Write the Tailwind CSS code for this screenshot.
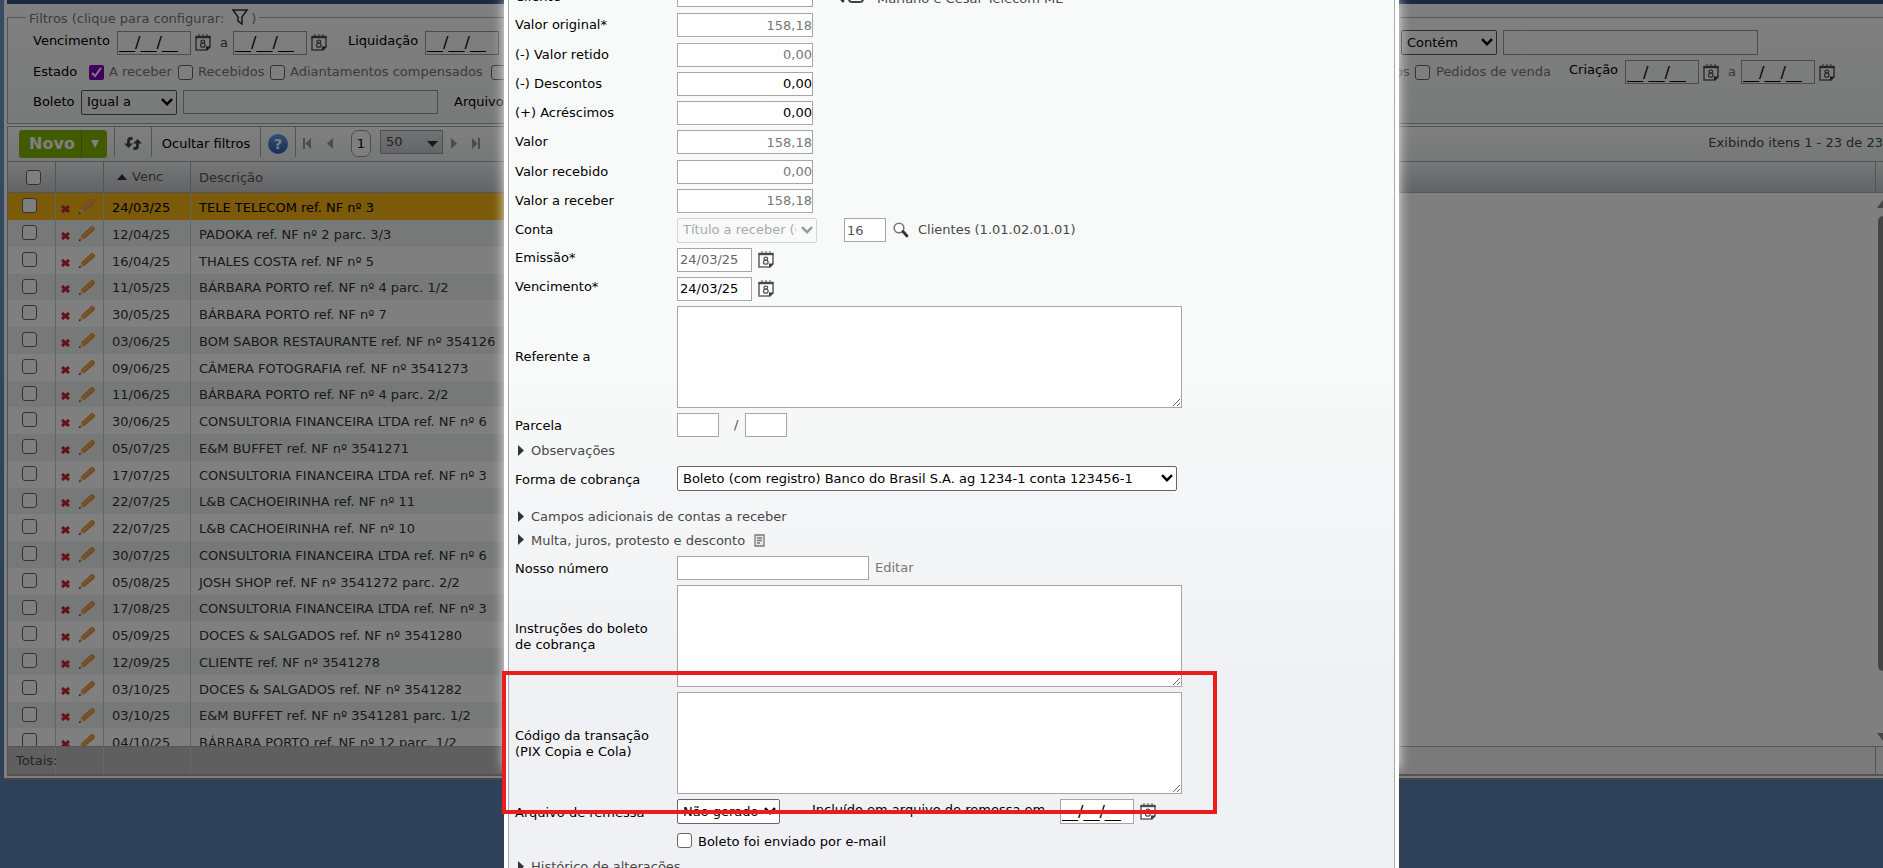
<!DOCTYPE html>
<html lang="pt-BR">
<head>
    <meta charset="UTF-8">
    <meta name="viewport" content="width=device-width, initial-scale=1.0">
    <title>Contas a receber</title>
    <script src="https://cdn.jsdelivr.net/npm/@tailwindcss/browser@4"></script>
</head>
<body class="font-['Verdana','DejaVu_Sans',sans-serif] text-[13px] leading-4 text-[#484848]">
    <!-- Shared icons -->
    <svg class="hidden">
        <symbol id="i-cal" viewBox="0 0 16 17">
            <path d="M1 3h14v10l-3 3H1z" fill="#fff" stroke="#666" stroke-width="1.600"/>
            <path d="M.5 3h15" stroke="#4a4a4a" stroke-width="2.400"/>
            <path d="M4 0v2M8 0v2M12 0v2" stroke="#888" stroke-width="1.500"/>
            <path d="M11 16.500V12.500h4.500z" fill="#333"/>
            <ellipse cx="7.800" cy="7.600" rx="1.900" ry="1.500" fill="none" stroke="#555" stroke-width="1.300"/>
            <ellipse cx="7.800" cy="11.200" rx="2.300" ry="2" fill="none" stroke="#555" stroke-width="1.300"/>
        </symbol>
        <symbol id="i-chev" viewBox="0 0 12 8">
            <path d="M1 1.200 6 6.200l5-5" fill="none" stroke="currentColor" stroke-width="2.400"/>
        </symbol>
        <symbol id="i-search" viewBox="0 0 16 16">
            <circle cx="6" cy="6" r="4.800" fill="#fff" stroke="#777" stroke-width="1.600"/>
            <path d="m10 9.500 4 4.500" stroke="#333" stroke-width="2.800" stroke-linecap="round"/>
        </symbol>
        <symbol id="i-x" viewBox="0 0 9 8">
            <path d="M1 1 8 7M8 1 1 7" stroke="#cc2236" stroke-width="3"/>
        </symbol>
        <symbol id="i-pencil" viewBox="0 0 18 17">
            <path d="M1 16.500l2.500-6 3.500 3.500z" fill="#e8d0a8"/>
            <path d="M.8 16.700l1-2.500 1.500 1.500z" fill="#333"/>
            <path d="M3 11 13 1.500q2-2 4 0t0 4L6.500 14.500z" fill="#e8963c"/>
            <path d="m4.500 12.500 11-10" stroke="#f5b068" stroke-width="1.500"/>
        </symbol>
        <symbol id="i-tri" viewBox="0 0 6 11">
            <path d="M0 0 6 5.500 0 11z" fill="#333"/>
        </symbol>
    </svg>

    <main class="relative h-screen overflow-hidden bg-linear-to-b from-[#6b94c6] from-20% to-[#5c82b2] to-70%">
        <!-- Listing behind the dialog -->
        <div class="w-[calc(100%+20px)] pl-1">
            <div class="border-b-2 border-[#8a8a88] bg-white pl-[3px] pb-[2px]">
                <div class="h-1 bg-[#34567f]"></div>
                <div class="border-b-2 border-[#a5a9b3]">
                    <fieldset class="mt-[2px] border border-[#a5a9b3] bg-linear-to-b from-white to-[#f0f3f2] pl-[18px] pb-[6px]">
                        <legend class="flex h-[22px] items-center gap-2 bg-white px-[3px] pt-1 text-[#777]">
                            Filtros (clique para configurar:
                            <span class="flex items-center gap-[3px]"><svg class="mb-1 h-4 w-4" viewBox="0 0 16 16" fill="#fff" stroke="#333" stroke-width="1.500"><path d="M1 1h14l-5 7v7l-4-3V8z"/></svg>)</span>
                        </legend>
                        <div class="flex h-[29px] items-center pl-[7px]">
                            <label for="venc1" class="mb-1 w-[84px] shrink-0 text-black">Vencimento</label>
                            <input id="venc1" value="__/__/__" class="h-6 w-[74px] shrink-0 border border-[#999] px-[1px] text-[16px] text-black">
                            <svg class="ml-1 h-[17px] w-4 shrink-0"><use href="#i-cal"/></svg>
                            <label for="venc2" class="w-[22px] shrink-0 pl-[9px]">a</label>
                            <input id="venc2" value="__/__/__" class="h-6 w-[74px] shrink-0 border border-[#999] px-[1px] text-[16px] text-black">
                            <svg class="ml-1 h-[17px] w-4 shrink-0"><use href="#i-cal"/></svg>
                            <label for="liq" class="mb-1 ml-[21px] w-[77px] shrink-0 text-black">Liquidação</label>
                            <input id="liq" value="__/__/__" class="h-6 w-[74px] shrink-0 border border-[#999] px-[1px] text-[16px] text-black">
                            <div class="relative mr-[6px] ml-auto">
                                <select aria-label="Condição" class="h-[25px] w-24 appearance-none rounded-[2px] border border-[#555] pl-[5px] text-black"><option>Contém</option></select>
                                <svg class="pointer-events-none absolute top-2 right-1 h-2 w-3 text-black"><use href="#i-chev"/></svg>
                            </div>
                            <input aria-label="Texto" class="mr-36 h-[25px] w-[255px] border border-[#999]">
                        </div>
                        <div class="flex h-[30px] items-center pl-[7px] text-[#777]">
                            <span class="w-14 text-black">Estado</span>
                            <label class="relative flex w-[89px] items-center gap-[5px] whitespace-nowrap">
                                <input type="checkbox" checked class="size-[15px] shrink-0 appearance-none rounded-[2px] bg-[#7c00b0]">
                                <svg class="absolute left-[2px] h-[11px] w-[11px]" viewBox="0 0 11 11"><path d="m1 6 3 3 6-8" fill="none" stroke="#fff" stroke-width="2"/></svg>
                                A receber
                            </label>
                            <label class="flex w-[92px] items-center gap-[5px] whitespace-nowrap"><input type="checkbox" class="size-[15px] shrink-0 appearance-none rounded-[3px] border border-[#666] bg-white">Recebidos</label>
                            <label class="flex w-[221px] items-center gap-[5px] whitespace-nowrap"><input type="checkbox" class="size-[15px] shrink-0 appearance-none rounded-[3px] border border-[#666] bg-white">Adiantamentos compensados</label>
                            <input type="checkbox" aria-label="Adiantamentos" class="size-[15px] shrink-0 appearance-none rounded-[3px] border border-[#666] bg-white">
                            <span class="ml-auto w-5">os</span>
                            <label class="flex w-[154px] items-center gap-[6px] whitespace-nowrap"><input type="checkbox" class="size-[15px] shrink-0 appearance-none rounded-[3px] border border-[#666] bg-white">Pedidos de venda</label>
                            <label for="cri1" class="mb-1 w-14 text-black">Criação</label>
                            <input id="cri1" value="__/__/__" class="h-6 w-[74px] border border-[#999] px-[1px] text-[16px] text-black">
                            <svg class="ml-1 h-[17px] w-4"><use href="#i-cal"/></svg>
                            <label for="cri2" class="w-[22px] pl-[9px]">a</label>
                            <input id="cri2" value="__/__/__" class="h-6 w-[74px] border border-[#999] px-[1px] text-[16px] text-black">
                            <svg class="mr-[67px] ml-1 h-[17px] w-4"><use href="#i-cal"/></svg>
                        </div>
                        <div class="flex h-[30px] items-center pl-[7px] text-black">
                            <label for="bol" class="w-12">Boleto</label>
                            <div class="relative mr-[6px]">
                                <select id="bol" class="h-[25px] w-24 appearance-none rounded-[2px] border border-[#555] pl-[5px]"><option>Igual a</option></select>
                                <svg class="pointer-events-none absolute top-2 right-1 h-2 w-3"><use href="#i-chev"/></svg>
                            </div>
                            <input aria-label="Boleto" class="mr-4 h-6 w-[255px] border border-[#999]">
                            <span>Arquivo</span>
                        </div>
                    </fieldset>

                    <!-- Toolbar -->
                    <div class="mt-[2px] flex h-[35px] border-t border-l border-[#a5a9b3] bg-linear-to-b from-white to-[#eceeee] pl-[11px]">
                        <div class="mt-[3px] flex h-7 w-[88px] rounded-[3px] bg-[#84b400] text-[16px] font-bold text-white">
                            <button class="w-[63px] border-r border-[#649400] pl-1">Novo</button>
                            <button aria-label="Mais opções" class="flex flex-1 items-center justify-center"><svg class="h-2 w-2" viewBox="0 0 8 8"><path d="M0 0h8L4 8z" fill="#fff"/></svg></button>
                        </div>
                        <button aria-label="Atualizar" class="ml-[7px] flex h-[30px] w-[37px] items-center justify-center border-l border-[#a5a9b3] pt-[3px]">
                            <svg class="h-[13px] w-[18px]" viewBox="0 0 18 13" fill="none" stroke="#444" stroke-width="2.800"><path d="M8.500 1.500H7Q4.500 1.500 4.500 4v4M9.500 11.500H11Q13.500 11.500 13.500 9V5"/><path d="M0 6.500h9L4.500 11zM9 6.500h9L13.500 2z" fill="#444" stroke="none"/></svg>
                        </button>
                        <button class="h-[30px] w-[109px] border-l border-[#a5a9b3] pt-1 whitespace-nowrap text-black">Ocultar filtros</button>
                        <button aria-label="Ajuda" class="flex h-[30px] w-9 items-center justify-center border-x border-[#a5a9b3] pt-[3px]">
                            <span class="flex size-5 items-center justify-center rounded-full bg-linear-to-b from-[#6a9ce8] to-[#2a5cb8] text-[14px] font-bold text-white">?</span>
                        </button>
                        <div class="flex h-[33px] items-center">
                            <button aria-label="Primeira" class="ml-[7px]"><svg class="h-[11px] w-2" viewBox="0 0 8 11" fill="#9599a2"><path d="M0 0h2v11H0zM8 0v11L2.500 5.500z"/></svg></button>
                            <button aria-label="Anterior" class="ml-4"><svg class="h-[11px] w-[6px]" viewBox="0 0 6 11" fill="#9599a2"><path d="M6 0v11L0 5.500z"/></svg></button>
                            <button class="ml-[18px] h-[27px] w-5 rounded-[7px] border border-[#999] bg-white text-black">1</button>
                            <div class="relative mr-2 mb-[3px] ml-[9px]">
                                <select aria-label="Itens por página" class="h-6 w-[63px] appearance-none border border-[#999da8] bg-linear-to-b from-[#e4e5e9] to-[#c9cbd2] pl-[5px] text-[#444]"><option>50</option></select>
                                <svg class="pointer-events-none absolute top-[11px] right-[5px] h-[6px] w-[11px]" viewBox="0 0 11 6"><path d="M0 0h11L5.500 6z" fill="#333"/></svg>
                            </div>
                            <button aria-label="Próxima"><svg class="h-[11px] w-[6px]" viewBox="0 0 6 11" fill="#9599a2"><path d="M0 0v11l6-5.500z"/></svg></button>
                            <button aria-label="Última" class="ml-[15px]"><svg class="h-[11px] w-2" viewBox="0 0 8 11" fill="#9599a2"><path d="M6 0h2v11H6zM0 0v11l5.500-5.500z"/></svg></button>
                        </div>
                        <div class="mr-5 ml-auto pt-2">Exibindo itens 1 - 23 de 23</div>
                    </div>

                    <!-- Grid header -->
                    <div class="border-l border-[#a5a9b3]">
                        <div class="flex h-8 border-y border-[#a5a9b3] bg-linear-to-b from-[#eff0f1] to-[#c6c7cb] leading-8 text-[#555]">
                            <div class="flex w-12 items-center border-r border-[#a5a9b3] pl-[18px]"><input type="checkbox" aria-label="Selecionar tudo" class="size-[15px] appearance-none rounded-[3px] border border-[#666] bg-white"></div>
                            <div class="w-12 border-r border-[#a5a9b3]"></div>
                            <div class="flex w-[87px] items-center gap-[5px] border-r border-[#a5a9b3] pl-[13px]"><svg class="h-[6px] w-[10px]" viewBox="0 0 10 6"><path d="M5 0l5 6H0z" fill="#333"/></svg>Venc</div>
                            <div class="flex-1 pl-2">Descrição</div>
                            <div class="w-7 border-l border-[#a5a9b3]"></div>
                        </div>
                        <div class="flex h-[553px] overflow-hidden">
                            <table class="h-fit w-[760px] table-fixed border-separate border-spacing-0 text-[#333]">
                                <colgroup><col class="w-12"><col class="w-12"><col class="w-[87px]"><col></colgroup>
                                <tbody id="linhas" class="[&>tr]:h-[27px] [&>tr:nth-child(4n)]:h-[26px] [&>tr:nth-child(even)]:bg-[#eff2f1]"></tbody>
                            </table>
                            <div class="mr-[14px] ml-auto flex w-3 flex-col items-center pt-[7px] pb-[5px]">
                                <svg class="h-2 w-3 shrink-0" viewBox="0 0 12 8"><path d="M6 0l6 8H0z" fill="#888"/></svg>
                                <div class="mt-2 mb-auto h-[455px] w-[10px] shrink-0 rounded-full bg-[#888]"></div>
                                <svg class="h-2 w-3 shrink-0" viewBox="0 0 12 8"><path d="M0 0h12L6 8z" fill="#888"/></svg>
                            </div>
                        </div>
                        <div class="flex h-7 border-t border-[#a5a9b3] bg-[#f2f5f3] leading-[27px]">
                            <div class="flex w-[760px] bg-[#bfbfbf]">
                                <div class="w-12 border-r border-[#d0d0d0] pl-2 whitespace-nowrap">Totais:</div>
                                <div class="w-12 border-r border-[#d0d0d0]"></div>
                                <div class="w-[87px] border-r border-[#d0d0d0]"></div>
                            </div>
                            <div class="ml-auto w-7 border-l border-[#a5a9b3]"></div>
                        </div>
                    </div>
                </div>
            </div>
        </div>
        <div class="absolute inset-0 bg-black/50"></div>

        <!-- Glow of the dialog over the listing -->
        <div class="absolute top-0 left-0 flex h-[774px] w-[calc(100%+20px)] justify-center overflow-hidden">
            <div class="h-[768px] w-[891px] shadow-[0_0_12px_1px_#ffffff]"></div>
        </div>

        <!-- Dialog -->
        <div class="absolute inset-y-0 left-0 flex w-[calc(100%+20px)] justify-center">
            <div class="relative -mt-5 h-fit w-[895px] bg-white px-1">
                <form class="border-x border-[#a5a9b3] bg-linear-to-b from-[#f8faf9] from-40% to-[#f0f1f4] to-75% pb-10 pl-[6px] text-black">
                    <div class="flex h-[30px] items-center">
                        <label for="cli" class="w-[162px] pt-1">Cliente</label>
                        <input id="cli" class="h-6 w-[136px] border border-[#a5a5a5] bg-white">
                        <svg class="ml-4 h-4 w-4"><use href="#i-search"/></svg>
                        <span class="mr-[13px] ml-[3px] size-4 rounded-[4px] border-2 border-[#444]"></span>
                        <span class="pt-2 text-[#484848]">Mariano e Cesar Telecom ME</span>
                    </div>
                    <div class="flex h-[30px] items-center">
                        <label for="vo" class="w-[162px]">Valor original*</label>
                        <input id="vo" value="158,18" class="h-6 w-[136px] border border-[#a5a5a5] bg-white text-right text-[#777]">
                    </div>
                    <div class="flex h-[29px] items-center">
                        <label for="vr" class="w-[162px]">(-) Valor retido</label>
                        <input id="vr" value="0,00" class="h-6 w-[136px] border border-[#a5a5a5] bg-white text-right text-[#777]">
                    </div>
                    <div class="flex h-[29px] items-center">
                        <label for="de" class="w-[162px]">(-) Descontos</label>
                        <input id="de" value="0,00" class="h-6 w-[136px] border border-[#a5a5a5] bg-white text-right">
                    </div>
                    <div class="flex h-[29px] items-center">
                        <label for="ac" class="w-[162px]">(+) Acréscimos</label>
                        <input id="ac" value="0,00" class="h-6 w-[136px] border border-[#a5a5a5] bg-white text-right">
                    </div>
                    <div class="flex h-[30px] items-center">
                        <label for="va" class="w-[162px]">Valor</label>
                        <input id="va" value="158,18" class="h-6 w-[136px] border border-[#a5a5a5] bg-white text-right text-[#777]">
                    </div>
                    <div class="flex h-[29px] items-center">
                        <label for="vrec" class="w-[162px]">Valor recebido</label>
                        <input id="vrec" value="0,00" class="h-6 w-[136px] border border-[#a5a5a5] bg-white text-right text-[#777]">
                    </div>
                    <div class="flex h-[29px] items-center">
                        <label for="var" class="w-[162px]">Valor a receber</label>
                        <input id="var" value="158,18" class="h-6 w-[136px] border border-[#a5a5a5] bg-white text-right text-[#777]">
                    </div>
                    <div class="flex h-[30px] items-center">
                        <label for="conta" class="w-[162px]">Conta</label>
                        <div class="relative">
                            <select id="conta" disabled class="h-[25px] w-[140px] appearance-none rounded-[2px] border border-[#d5d5d5] pr-5 pl-[5px] text-[#aaa] opacity-100"><option>Título a receber (Contas)</option></select>
                            <svg class="pointer-events-none absolute top-2 right-1 h-2 w-3 text-[#999]"><use href="#i-chev"/></svg>
                        </div>
                        <input aria-label="Código da conta" value="16" class="ml-[27px] h-6 w-[42px] border border-[#a5a5a5] bg-white pl-[2px] text-[#555]">
                        <svg class="mr-[9px] ml-[7px] h-4 w-4"><use href="#i-search"/></svg>
                        <span class="text-[#484848]">Clientes (1.01.02.01.01)</span>
                    </div>
                    <div class="flex h-[29px] items-center">
                        <label for="em" class="mb-1 w-[162px]">Emissão*</label>
                        <input id="em" value="24/03/25" class="h-6 w-[75px] border border-[#a5a5a5] bg-white pl-[2px] text-[#666]">
                        <svg class="ml-[6px] h-[17px] w-4"><use href="#i-cal"/></svg>
                    </div>
                    <div class="flex h-[29px] items-center">
                        <label for="ve" class="mb-1 w-[162px]">Vencimento*</label>
                        <input id="ve" value="24/03/25" class="h-6 w-[75px] border border-[#a5a5a5] bg-white pl-[2px]">
                        <svg class="ml-[6px] h-[17px] w-4"><use href="#i-cal"/></svg>
                    </div>
                    <div class="flex h-[107px] items-center">
                        <label for="ref" class="w-[162px]">Referente a</label>
                        <textarea id="ref" class="h-[102px] w-[505px] border border-[#a5a5a5] bg-white"></textarea>
                    </div>
                    <div class="flex h-[30px] items-center">
                        <label for="pa" class="w-[162px] pt-[2px]">Parcela</label>
                        <input id="pa" class="h-6 w-[42px] border border-[#a5a5a5] bg-white">
                        <label for="pb" class="w-[26px] pl-[15px] text-[#555]">/</label>
                        <input id="pb" class="h-6 w-[42px] border border-[#a5a5a5] bg-white">
                    </div>
                    <div class="flex h-[22px] items-center gap-[7px] pl-[3px] text-[#484848]"><svg class="mb-[2px] h-[11px] w-[6px]"><use href="#i-tri"/></svg>Observações</div>
                    <div class="flex h-[33px] items-center">
                        <label for="fc" class="w-[162px] pt-[2px]">Forma de cobrança</label>
                        <div class="relative">
                            <select id="fc" class="h-[25px] w-[500px] appearance-none rounded-[2px] border border-[#666] bg-white pl-[5px]"><option>Boleto (com registro) Banco do Brasil S.A. ag 1234-1 conta 123456-1</option></select>
                            <svg class="pointer-events-none absolute top-2 right-1 h-2 w-3"><use href="#i-chev"/></svg>
                        </div>
                    </div>
                    <div class="mt-[10px] flex h-6 items-center gap-[7px] pl-[3px] text-[#484848]"><svg class="mb-[2px] h-[11px] w-[6px]"><use href="#i-tri"/></svg>Campos adicionais de contas a receber</div>
                    <div class="flex h-[23px] items-center gap-[7px] pl-[3px] text-[#484848]"><svg class="mb-[2px] h-[11px] w-[6px]"><use href="#i-tri"/></svg>Multa, juros, protesto e desconto
                        <svg class="ml-[2px] h-[13px] w-[11px]" viewBox="0 0 11 13" fill="#e8e8e8" stroke="#777" stroke-width="1.300"><path d="M1 1h9v11H1zM3 4h5M3 6.500h5M3 9h3"/></svg>
                    </div>
                    <div class="flex h-[31px] items-center">
                        <label for="nn" class="w-[162px] pt-[2px]">Nosso número</label>
                        <input id="nn" class="h-6 w-48 border border-[#a5a5a5] bg-white">
                        <a href="#" class="ml-[6px] text-[#777]">Editar</a>
                    </div>
                    <div class="flex h-[106px] items-center">
                        <label for="ins" class="w-[162px] pt-[2px]">Instruções do boleto<br>de cobrança</label>
                        <textarea id="ins" class="h-[102px] w-[505px] border border-[#a5a5a5] bg-white"></textarea>
                    </div>
                    <div class="flex h-[108px] items-center">
                        <label for="pix" class="w-[162px] pt-[2px]">Código da transação<br>(PIX Copia e Cola)</label>
                        <textarea id="pix" class="h-[102px] w-[505px] border border-[#a5a5a5] bg-white"></textarea>
                    </div>
                    <div class="flex h-[29px] items-center">
                        <label for="ar" class="w-[162px] pt-[2px]">Arquivo de remessa</label>
                        <div class="relative mr-8">
                            <select id="ar" class="h-[25px] w-[103px] appearance-none rounded-[2px] border border-[#666] bg-white pl-[5px]"><option>Não gerado</option></select>
                            <svg class="pointer-events-none absolute top-2 right-1 h-2 w-3"><use href="#i-chev"/></svg>
                        </div>
                        <label for="inc" class="mb-1 w-[248px] whitespace-nowrap">Incluído em arquivo de remessa em</label>
                        <input id="inc" value="__/__/__" class="h-[25px] w-[74px] border border-[#a5a5a5] bg-white px-[1px] text-[16px]">
                        <svg class="ml-[6px] h-[17px] w-4"><use href="#i-cal"/></svg>
                    </div>
                    <div class="flex h-[29px] items-center pl-[162px]">
                        <label for="mail" class="order-2 pt-[2px] pl-[6px]">Boleto foi enviado por e-mail</label>
                        <input id="mail" type="checkbox" class="size-[15px] appearance-none rounded-[3px] border border-[#666] bg-white">
                    </div>
                    <div class="flex h-6 items-center gap-[7px] pl-[3px] text-[#484848]"><svg class="mb-[2px] h-[11px] w-[6px]"><use href="#i-tri"/></svg>Histórico de alterações</div>
                </form>
                <!-- Highlight around the PIX field -->
                <div class="pointer-events-none absolute top-[691px] -left-[2px] h-[143px] w-[715px] border-4 border-[#ec1c1c]"></div>
            </div>
        </div>
    </main>

    <script>
        const titulos = [
            ['24/03/25', 'TELE TELECOM ref. NF nº 3'],
            ['12/04/25', 'PADOKA ref. NF nº 2 parc. 3/3'],
            ['16/04/25', 'THALES COSTA ref. NF nº 5'],
            ['11/05/25', 'BÁRBARA PORTO ref. NF nº 4 parc. 1/2'],
            ['30/05/25', 'BÁRBARA PORTO ref. NF nº 7'],
            ['03/06/25', 'BOM SABOR RESTAURANTE ref. NF nº 354126'],
            ['09/06/25', 'CÂMERA FOTOGRAFIA ref. NF nº 3541273'],
            ['11/06/25', 'BÁRBARA PORTO ref. NF nº 4 parc. 2/2'],
            ['30/06/25', 'CONSULTORIA FINANCEIRA LTDA ref. NF nº 6'],
            ['05/07/25', 'E&amp;M BUFFET ref. NF nº 3541271'],
            ['17/07/25', 'CONSULTORIA FINANCEIRA LTDA ref. NF nº 3'],
            ['22/07/25', 'L&amp;B CACHOEIRINHA ref. NF nº 11'],
            ['22/07/25', 'L&amp;B CACHOEIRINHA ref. NF nº 10'],
            ['30/07/25', 'CONSULTORIA FINANCEIRA LTDA ref. NF nº 6'],
            ['05/08/25', 'JOSH SHOP ref. NF nº 3541272 parc. 2/2'],
            ['17/08/25', 'CONSULTORIA FINANCEIRA LTDA ref. NF nº 3'],
            ['05/09/25', 'DOCES &amp; SALGADOS ref. NF nº 3541280'],
            ['12/09/25', 'CLIENTE ref. NF nº 3541278'],
            ['03/10/25', 'DOCES &amp; SALGADOS ref. NF nº 3541282'],
            ['03/10/25', 'E&amp;M BUFFET ref. NF nº 3541281 parc. 1/2'],
            ['04/10/25', 'BÁRBARA PORTO ref. NF nº 12 parc. 1/2']
        ];
        document.getElementById('linhas').innerHTML = titulos.map((t, i) => `
            <tr class="${i === 0 ? 'bg-[#f6b414] text-black' : ''}">
                <td class="border-r border-[#c8caca] p-0"><input type="checkbox" aria-label="Selecionar ${t[1]}" class="mb-[2px] ml-[14px] block size-[15px] appearance-none rounded-[3px] border border-[#666] bg-white"></td>
                <td class="border-r border-[#c8caca] p-0"><div class="flex items-center gap-2 pl-[5px]"><svg class="mt-1 h-2 w-[9px]"><use href="#i-x"/></svg><svg class="h-[17px] w-[17px]"><use href="#i-pencil"/></svg></div></td>
                <td class="border-r border-[#c8caca] p-0 pt-[2px] pl-2">${t[0]}</td>
                <td class="p-0 pt-[2px] pl-2 whitespace-nowrap">${t[1]}</td>
            </tr>`).join('');
    </script>
</body>
</html>
